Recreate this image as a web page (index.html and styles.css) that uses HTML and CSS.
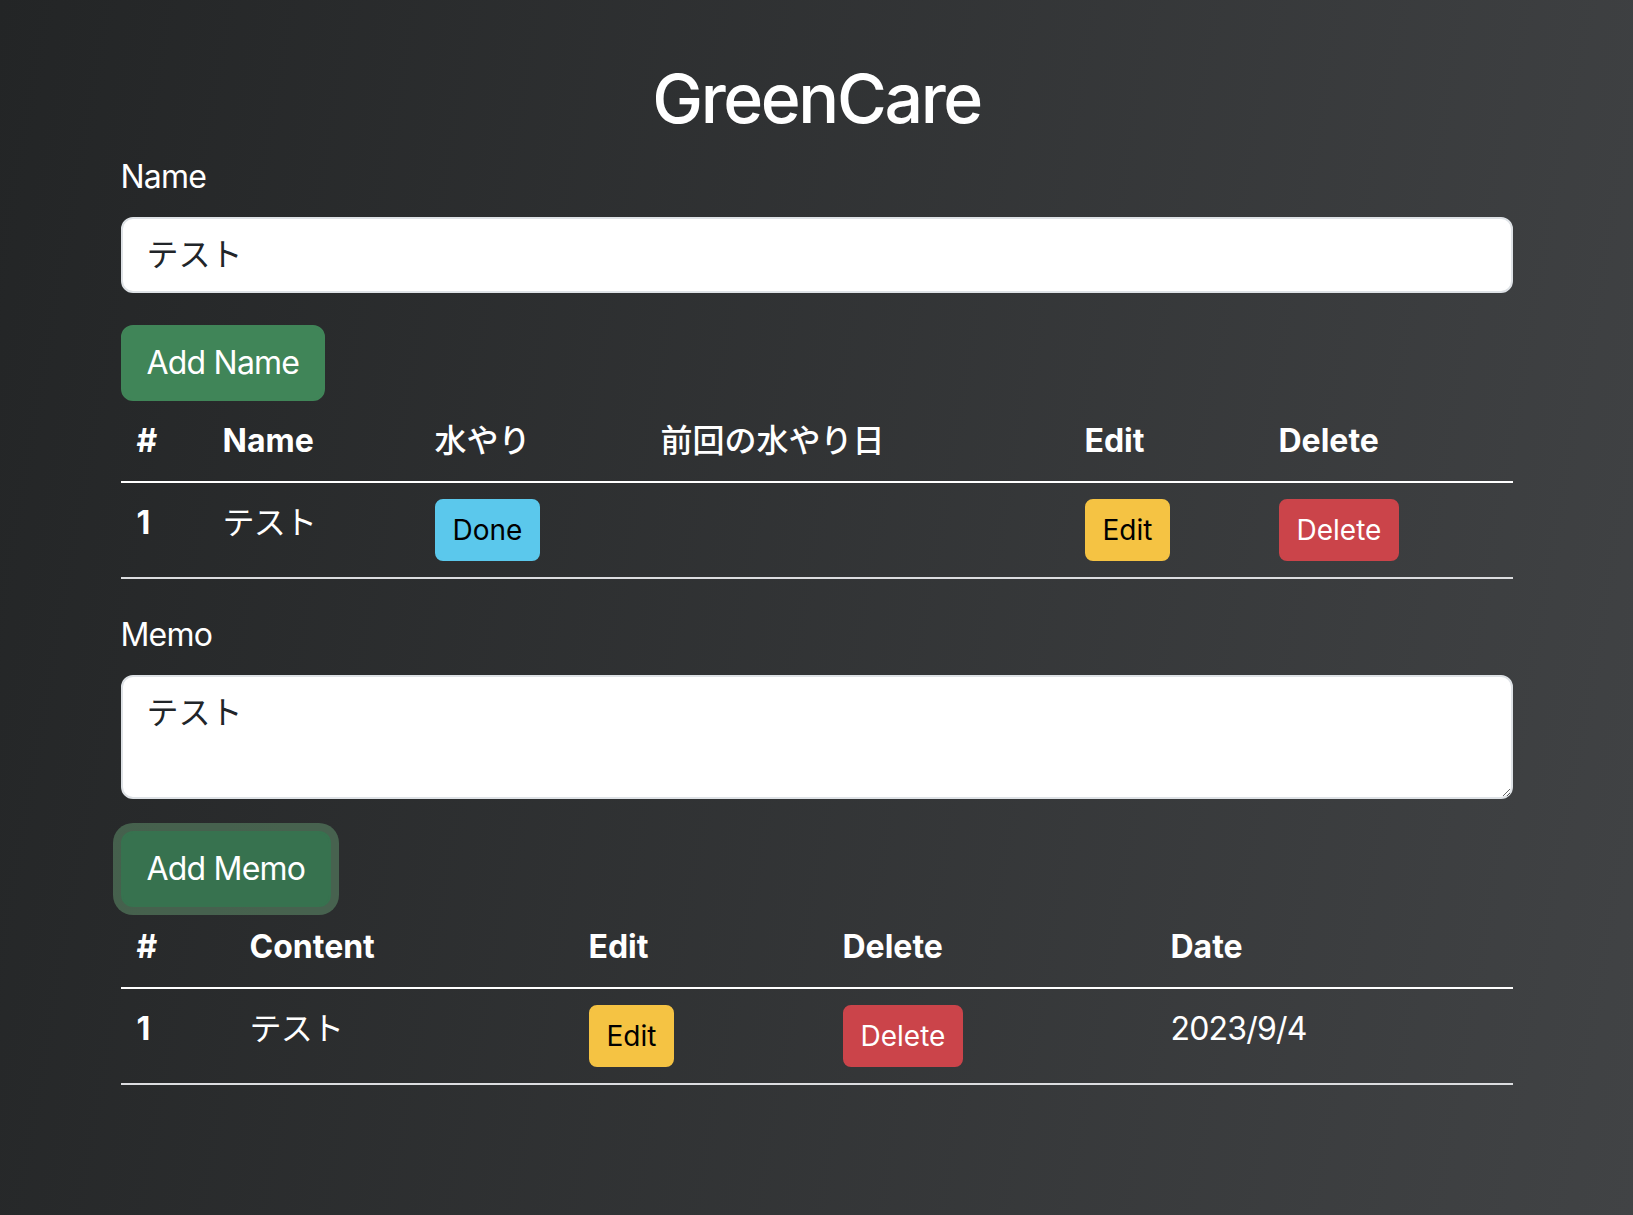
FILE: index.html
```html
<!DOCTYPE html>
<html lang="ja">
<head>
<meta charset="utf-8">
<title>GreenCare</title>
<link rel="stylesheet" href="styles.css">
</head>
<body>
<div class="container">
  <h1 class="title">GreenCare</h1>

  <div class="field">
    <label class="form-label" for="name">Name</label>
    <input class="form-control" id="name" type="text" value="テスト">
  </div>
  <div class="actions">
    <button class="btn btn-success">Add Name</button>
  </div>

  <table class="table table-names">
    <colgroup>
      <col class="n1"><col class="n2"><col class="n3"><col class="n4"><col class="n5"><col class="n6">
    </colgroup>
    <thead>
      <tr>
        <th>#</th>
        <th>Name</th>
        <th><span class="jp">水やり</span></th>
        <th><span class="jp">前回の水やり日</span></th>
        <th>Edit</th>
        <th>Delete</th>
      </tr>
    </thead>
    <tbody>
      <tr>
        <th>1</th>
        <td>テスト</td>
        <td><button class="btn btn-sm btn-info">Done</button></td>
        <td></td>
        <td><button class="btn btn-sm btn-warning">Edit</button></td>
        <td><button class="btn btn-sm btn-danger">Delete</button></td>
      </tr>
    </tbody>
  </table>

  <div class="field">
    <label class="form-label" for="memo">Memo</label>
    <textarea class="form-control memo" id="memo" rows="2">テスト</textarea>
  </div>
  <div class="actions">
    <button class="btn btn-success is-focused">Add Memo</button>
  </div>

  <table class="table table-memos">
    <colgroup>
      <col class="m1"><col class="m2"><col class="m3"><col class="m4"><col class="m5">
    </colgroup>
    <thead>
      <tr>
        <th>#</th>
        <th>Content</th>
        <th>Edit</th>
        <th>Delete</th>
        <th>Date</th>
      </tr>
    </thead>
    <tbody>
      <tr>
        <th>1</th>
        <td>テスト</td>
        <td><button class="btn btn-sm btn-warning">Edit</button></td>
        <td><button class="btn btn-sm btn-danger">Delete</button></td>
        <td>2023/9/4</td>
      </tr>
    </tbody>
  </table>
</div>
</body>
</html>
```

FILE: styles.css
```css
html {
  background: #2c2d30;
}

body {
  margin: 0;
  min-height: 100vh;
  background: linear-gradient(100deg, #232526 0%, #414345 100%);
  color: #ffffff;
  font-family: Inter, "Noto Sans CJK JP", sans-serif;
  font-size: 32px;
  line-height: 48px;
}

.container {
  width: 1392px;
  margin: 0 auto;
  padding-top: 57px;
}

.title {
  margin: 0 0 14px;
  font-size: 68px;
  line-height: 82px;
  font-weight: 500;
  letter-spacing: -0.035em;
  text-align: center;
}

.field {
  margin-bottom: 32px;
}

.form-label {
  display: block;
  margin-bottom: 16px;
  font-weight: 400;
  letter-spacing: -0.025em;
}

.form-control {
  display: block;
  width: 100%;
  box-sizing: border-box;
  padding: 12px 24px;
  border: 2px solid #dee2e6;
  border-radius: 12px;
  background: #ffffff;
  color: #212529;
  font-family: Inter, "Noto Sans CJK JP", sans-serif;
  font-size: 32px;
  line-height: 48px;
  margin: 0;
  outline: none;
}

.memo {
  height: 124px;
  resize: vertical;
}

.actions {
  display: flex;
}

.btn {
  display: inline-block;
  padding: 12px 24px;
  border: 2px solid transparent;
  border-radius: 12px;
  font-family: Inter, "Noto Sans CJK JP", sans-serif;
  font-size: 32px;
  line-height: 48px;
  font-weight: 400;
  letter-spacing: -0.025em;
  cursor: pointer;
  margin: 0;
}

.btn-success {
  background: #408558;
  border-color: #408558;
  color: #ffffff;
}

.btn-success.is-focused {
  background: #37724f;
  border-color: #37724f;
  box-shadow: 0 0 0 8px rgba(99, 151, 112, 0.5);
}

.btn-sm {
  padding: 8px 16px;
  font-size: 28px;
  line-height: 42px;
  border-radius: 8px;
  letter-spacing: 0;
}

.btn-info {
  background: #5bc8ec;
  border-color: #5bc8ec;
  color: #000000;
}

.btn-warning {
  background: #f5c343;
  border-color: #f5c343;
  color: #000000;
}

.btn-danger {
  background: #cb444a;
  border-color: #cb444a;
  color: #ffffff;
}

.table {
  width: 100%;
  border-collapse: collapse;
  table-layout: fixed;
  margin-bottom: 32px;
  color: #ffffff;
}

.table th,
.table td {
  padding: 16px;
  text-align: left;
  vertical-align: top;
  line-height: 48px;
}

.table th {
  font-weight: 700;
}

.table thead th {
  border-bottom: 2px solid #ffffff;
}

.table tbody th,
.table tbody td {
  border-bottom: 2px solid #dcdde0;
  font-weight: 400;
}

.table tbody td {
  letter-spacing: -0.025em;
}

.table tbody th {
  font-weight: 700;
}

.jp {
  font-weight: 500;
}

.n1 { width: 86px; }
.n2 { width: 212px; }
.n3 { width: 226px; }
.n4 { width: 424px; }
.n5 { width: 194px; }
.n6 { width: 250px; }

.m1 { width: 113px; }
.m2 { width: 339px; }
.m3 { width: 254px; }
.m4 { width: 328px; }
.m5 { width: 358px; }
```
